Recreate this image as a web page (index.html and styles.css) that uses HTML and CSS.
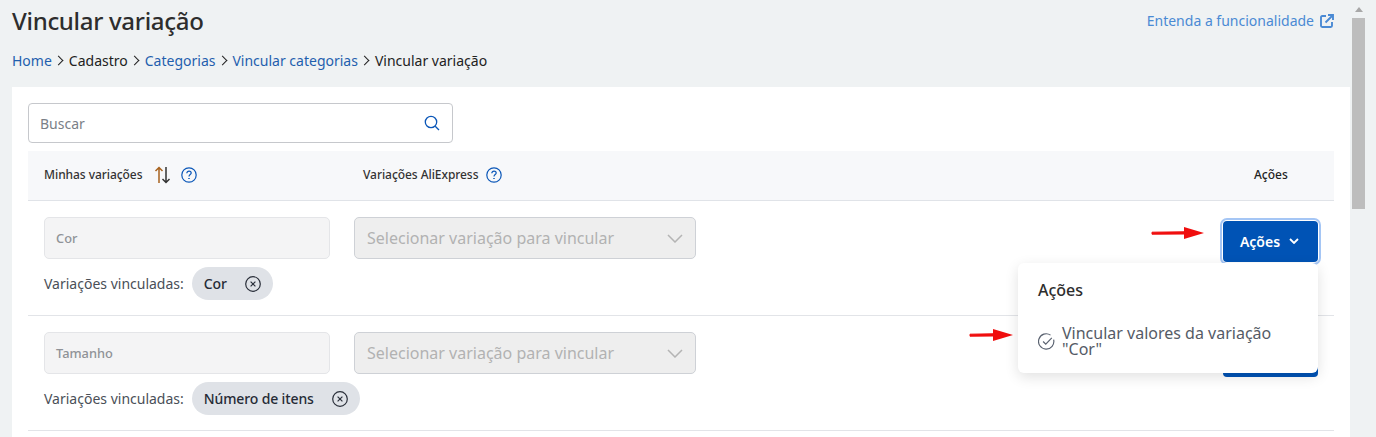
FILE: index.html
```html
<!DOCTYPE html>
<html lang="pt-BR">
<head>
<meta charset="utf-8">
<title>Vincular variação</title>
<link rel="stylesheet" href="styles.css">
</head>
<body>
<div class="app">
  <main class="main">
    <header class="top">
      <h1 class="title">Vincular variação</h1>
      <a class="help-link">Entenda a funcionalidade
        <svg class="ext" viewBox="0 0 14 14" width="14" height="14" fill="none" stroke="#4a8ad4" stroke-width="1.900"><path d="M6 2H2.2C1.5 2 1 2.500 1 3.200V11.800C1 12.500 1.500 13 2.200 13H10.800C11.500 13 12 12.500 12 11.800V8"/><path d="M5.500 8.500L12.500 1.500M8 1H13V6"/></svg>
      </a>
    </header>
    <nav class="crumbs">
      <a>Home</a><span class="sep"></span><span>Cadastro</span><span class="sep"></span><a>Categorias</a><span class="sep"></span><a>Vincular categorias</a><span class="sep"></span><span>Vincular variação</span>
    </nav>
    <section class="card">
      <div class="search">
        <span>Buscar</span>
        <svg viewBox="0 0 16 16" width="16" height="16" fill="none" stroke="#0b57b8" stroke-width="1.300"><circle cx="7" cy="7" r="5.700"/><path d="M11.200 11.200L15 15"/></svg>
      </div>
      <div class="thead">
        <div class="th-a"><span class="th-label">Minhas variações</span>
          <svg class="sort" viewBox="0 0 17 18" width="17" height="18" fill="none" stroke-width="1.500"><path stroke="#a8621f" d="M5 17V1.500M1.500 5L5 1.500L8.500 5"/><path stroke="#333" d="M12 1V16.500M8.500 13L12 16.500L15.500 13"/></svg>
          <svg class="q" viewBox="0 0 16 16" width="16" height="16" fill="none" stroke="#0b57b8" stroke-width="1.200"><circle cx="8" cy="8" r="7.200"/><path d="M5.800 6.200C5.800 4.900 6.800 4.100 8 4.100C9.300 4.100 10.200 4.900 10.200 6C10.200 7.500 8 7.600 8 9.400"/><path d="M8 11V12" stroke-width="1.500"/></svg>
        </div>
        <div class="th-b"><span class="th-label">Variações AliExpress</span>
          <svg class="q" viewBox="0 0 16 16" width="16" height="16" fill="none" stroke="#0b57b8" stroke-width="1.200"><circle cx="8" cy="8" r="7.200"/><path d="M5.800 6.200C5.800 4.900 6.800 4.100 8 4.100C9.300 4.100 10.200 4.900 10.200 6C10.200 7.500 8 7.600 8 9.400"/><path d="M8 11V12" stroke-width="1.500"/></svg>
        </div>
        <div class="th-c">Ações</div>
      </div>

      <div class="row">
        <div class="fields">
          <div class="input">Cor</div>
          <div class="select">Selecionar variação para vincular
            <svg viewBox="0 0 16 9" width="16" height="9" fill="none" stroke="#b4b4b4" stroke-width="1.500"><path d="M1 1L8 8L15 1"/></svg>
          </div>
          <div class="act">
            <button class="btn focus">Ações
              <svg viewBox="0 0 10 6" width="10" height="6" fill="none" stroke="#fff" stroke-width="1.800"><path d="M1 1L5 5L9 1"/></svg>
            </button>
          </div>
        </div>
        <div class="linked">Variações vinculadas:
          <span class="chip">Cor
            <svg viewBox="0 0 16 16" width="16" height="16" fill="none" stroke="#2a2f3a" stroke-width="1.200"><circle cx="8" cy="8" r="7.300"/><path d="M5.600 5.600L10.400 10.400M10.400 5.600L5.600 10.400"/></svg>
          </span>
        </div>
      </div>

      <div class="row">
        <div class="fields">
          <div class="input">Tamanho</div>
          <div class="select">Selecionar variação para vincular
            <svg viewBox="0 0 16 9" width="16" height="9" fill="none" stroke="#b4b4b4" stroke-width="1.500"><path d="M1 1L8 8L15 1"/></svg>
          </div>
          <div class="act">
            <button class="btn" aria-label="Ações"></button>
          </div>
        </div>
        <div class="linked">Variações vinculadas:
          <span class="chip">Número de itens
            <svg viewBox="0 0 16 16" width="16" height="16" fill="none" stroke="#2a2f3a" stroke-width="1.200"><circle cx="8" cy="8" r="7.300"/><path d="M5.600 5.600L10.400 10.400M10.400 5.600L5.600 10.400"/></svg>
          </span>
        </div>
      </div>

      <svg class="arrow arrow-a" viewBox="0 0 53 14" width="53" height="14"><path d="M1 6.200L33 5.800V8L1 8.200Z" fill="#f00e0e" stroke="#f00e0e" stroke-linejoin="round"/><path d="M33 1L53 7L33 13Z" fill="#f00e0e"/></svg>
      <svg class="arrow arrow-b" viewBox="0 0 44 14" width="44" height="14"><path d="M1 6.200L24 5.800V8L1 8.200Z" fill="#f00e0e" stroke="#f00e0e" stroke-linejoin="round"/><path d="M24 1L44 7L24 13Z" fill="#f00e0e"/></svg>

      <div class="menu">
        <div class="menu-title">Ações</div>
        <div class="menu-item">
          <svg viewBox="0 0 16 16" width="17" height="17" fill="none" stroke="#5a6270" stroke-width="1.100"><path d="M14.700 6.200A7.200 7.200 0 1 1 11.800 2"/><path d="M4.800 8L7.300 10.500L13 4.500"/></svg>
          <span>Vincular valores da variação "Cor"</span>
        </div>
      </div>
    </section>
  </main>
  <aside class="rail">
    <span class="up"></span>
    <span class="thumb"></span>
  </aside>
</div>
</body>
</html>
```
FILE: styles.css
```css
* { box-sizing: border-box; }
html, body { margin: 0; height: 100%; overflow: hidden; }
body { background: #eff2f3; font-family: "Noto Sans", sans-serif; color: #2b2b2b; }
.app { display: flex; height: 437px; overflow: hidden; }
.main { width: 1350px; flex: none; padding: 0 0 0 12px; }
.rail { width: 26px; flex: none; display: flex; flex-direction: column; align-items: flex-start; padding: 7px 0 0 2px; }
.up { width: 0; height: 0; margin-left: 3px; border: 4px solid transparent; border-top: 0; border-bottom: 5px solid #a8a8a8; }
.thumb { width: 13px; height: 191px; margin-top: 6px; background: #bdbdbd; }

.top { display: flex; justify-content: space-between; align-items: flex-start; height: 46px; }
.title { margin: 4px 0 0; font-size: 24px; line-height: 33px; font-weight: 500; letter-spacing: -.3px; color: #2d2d2d; }
.help-link { display: flex; align-items: center; gap: 6px; margin: 11px 16px 0 0; font-size: 14px; line-height: 20px; color: #4a8ad4; }

.crumbs { display: flex; align-items: center; height: 28px; font-size: 14px; color: #222; }
.crumbs a { color: #1f5fae; }
.sep { width: 7px; height: 7px; margin: 0 6.500px 0 3.500px; border-top: 1.700px solid #222; border-right: 1.700px solid #222; transform: rotate(45deg); }

.card { position: relative; margin-top: 13px; height: 360px; background: #fff; padding: 16px 16px 0; }
.search { display: flex; justify-content: space-between; align-items: center; width: 425px; height: 40px; padding: 0 12px 0 11px; border: 1px solid #c6c8cc; border-radius: 4px; font-size: 14px; color: #7a7f87; }
.thead { display: flex; align-items: center; height: 50px; margin-top: 8px; padding-bottom: 2px; background: #f7f8fa; border-bottom: 1px solid #e0e3e8; font-size: 12px; font-weight: 500; color: #333; }
.th-label { letter-spacing: -.06px; }
.th-a { display: flex; align-items: center; width: 335px; padding-left: 16px; }
.sort { margin: 1px 0 0 12px; }
.q { flex: none; }
.th-a .q { margin-left: 10px; }
.th-b { display: flex; align-items: center; width: 891px; }
.th-b .q { margin-left: 8px; }
.th-c { color: #222; }

.row { height: 115px; padding: 16px 16px 0; border-bottom: 1px solid #e2e4e8; }
.fields { display: flex; align-items: flex-start; }
.input { width: 286px; height: 42px; display: flex; align-items: center; padding: 0 11px; background: #f4f4f5; border: 1px solid #e4e5e8; border-radius: 5px; font-size: 12.800px; font-weight: 500; color: #8f9297; }
.select { display: flex; justify-content: space-between; align-items: center; width: 342px; height: 42px; margin-left: 24px; padding: 0 12px; background: #eeeeee; border: 1px solid #ced1d6; border-radius: 5px; font-size: 16px; color: #b2b2b2; }
.act { margin-left: auto; padding-top: 4px; }
.btn { display: flex; justify-content: center; align-items: center; gap: 9px; width: 95px; height: 41px; padding: 0 2px 1px 0; border: 0; border-radius: 4px; background: #0053b5; color: #fff; font: 600 14px "Noto Sans", sans-serif; }
.btn.focus { outline: 2px solid #a5c6f5; outline-offset: 1px; }
.linked { display: flex; align-items: center; gap: 8px; margin-top: 5px; font-size: 14px; color: #4a4f57; }
.chip { display: flex; align-items: center; gap: 18px; height: 33px; padding: 0 12px; border-radius: 17px; background: #dfe2e7; font-weight: 500; letter-spacing: -.13px; color: #262b36; }

.arrow { position: absolute; }
.arrow-a { left: 1139px; top: 139px; }
.arrow-b { left: 957px; top: 241px; }
.menu { position: absolute; left: 1006px; top: 176px; width: 300px; height: 110px; padding: 16px 20px 0; background: #fff; border-radius: 6px; box-shadow: 0 4px 14px rgba(0, 0, 0, .12); }
.menu-title { font-size: 16px; line-height: 22px; font-weight: 500; color: #2d2d2d; }
.menu-item { display: flex; align-items: center; gap: 7px; margin-top: 24px; font-size: 16px; line-height: 16px; color: #555b66; }
.menu-item svg { flex: none; }
```
